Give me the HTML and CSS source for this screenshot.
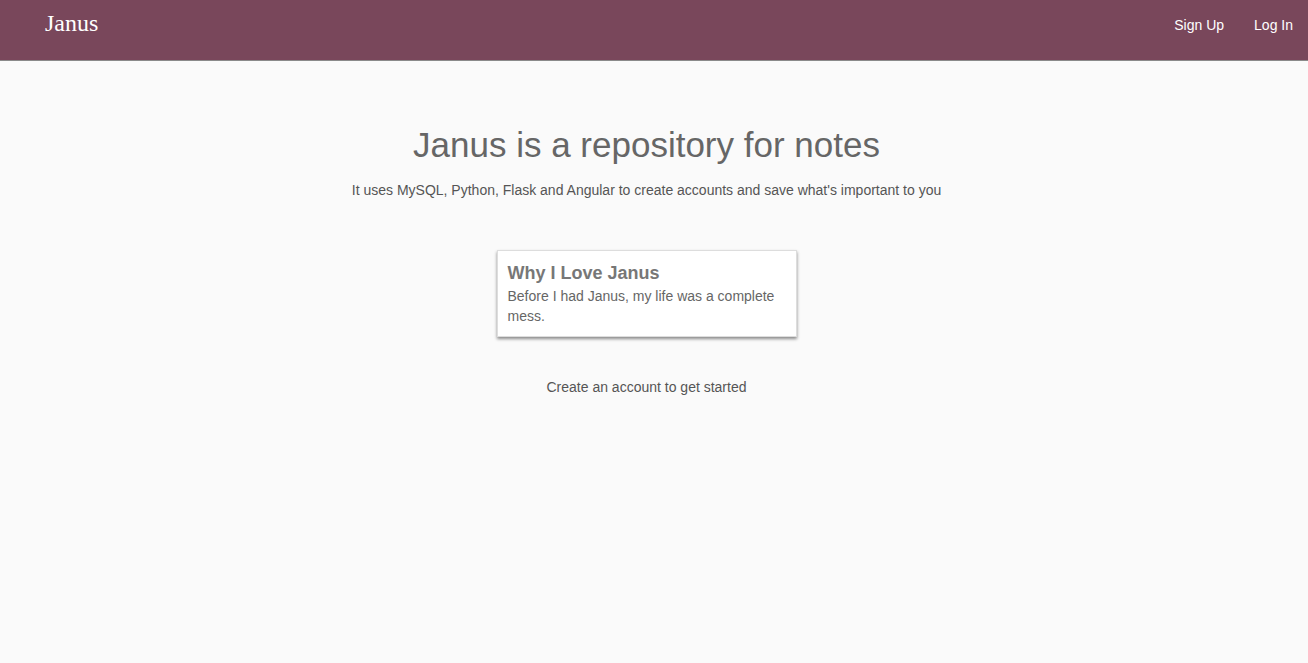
FILE: index.html
```html
<!DOCTYPE html>
<html>
<head>
<meta charset="utf-8">
<link rel="stylesheet" href="styles.css">
</head>
<body>
<header class="navbar">
  <a class="brand">Janus</a>
  <nav class="nav-links">
    <a class="nav-link">Sign Up</a>
    <a class="nav-link">Log In</a>
  </nav>
</header>
<main class="main">
  <h1 class="title">Janus is a repository for notes</h1>
  <p class="subtitle">It uses MySQL, Python, Flask and Angular to create accounts and save what's important to you</p>
  <div class="card">
    <h3 class="card-title">Why I Love Janus</h3>
    <p class="card-text">Before I had Janus, my life was a complete mess.</p>
  </div>
  <p class="cta">Create an account to get started</p>
</main>
</body>
</html>
```
FILE: styles.css
```css
html, body {
  margin: 0;
  padding: 0;
}
body {
  background: #fafafa;
  font-family: "Liberation Sans", Arial, Helvetica, sans-serif;
  color: #666;
  min-height: 663px;
}
.navbar {
  height: 60px;
  background: #79475b;
  border-bottom: 1px solid #8a8a8a;
  display: flex;
  align-items: center;
  justify-content: space-between;
  padding: 0 15px 0 45px;
}
.brand {
  font-family: "Liberation Serif", "DejaVu Serif", serif;
  font-size: 24px;
  color: #fff;
  margin-top: -14px;
}
.nav-links {
  display: flex;
  gap: 30px;
  margin-top: -10px;
}
.nav-link {
  color: #fff;
  font-size: 14px;
}
.main {
  display: flex;
  flex-direction: column;
  align-items: center;
  padding-right: 15px;
}
.title {
  margin: 65px 0 0;
  font-size: 35px;
  font-weight: normal;
  line-height: 38px;
  color: #666;
}
.subtitle {
  margin: 16px 0 0;
  font-size: 14px;
  line-height: 20px;
  color: #555;
}
.card {
  margin-top: 50px;
  width: 300px;
  box-sizing: border-box;
  background: #fff;
  border: 1px solid #ddd;
  box-shadow: 0 2px 3px rgba(0, 0, 0, 0.45);
  padding: 11px 10px 10px;
}
.card-title {
  margin: 0;
  font-size: 18px;
  line-height: 22px;
  font-weight: bold;
  color: #777;
}
.card-text {
  margin: 2px 0 0;
  font-size: 14px;
  line-height: 20px;
  color: #666;
}
.cta {
  margin: 40px 0 0;
  font-size: 14px;
  line-height: 20px;
  color: #555;
}
```
